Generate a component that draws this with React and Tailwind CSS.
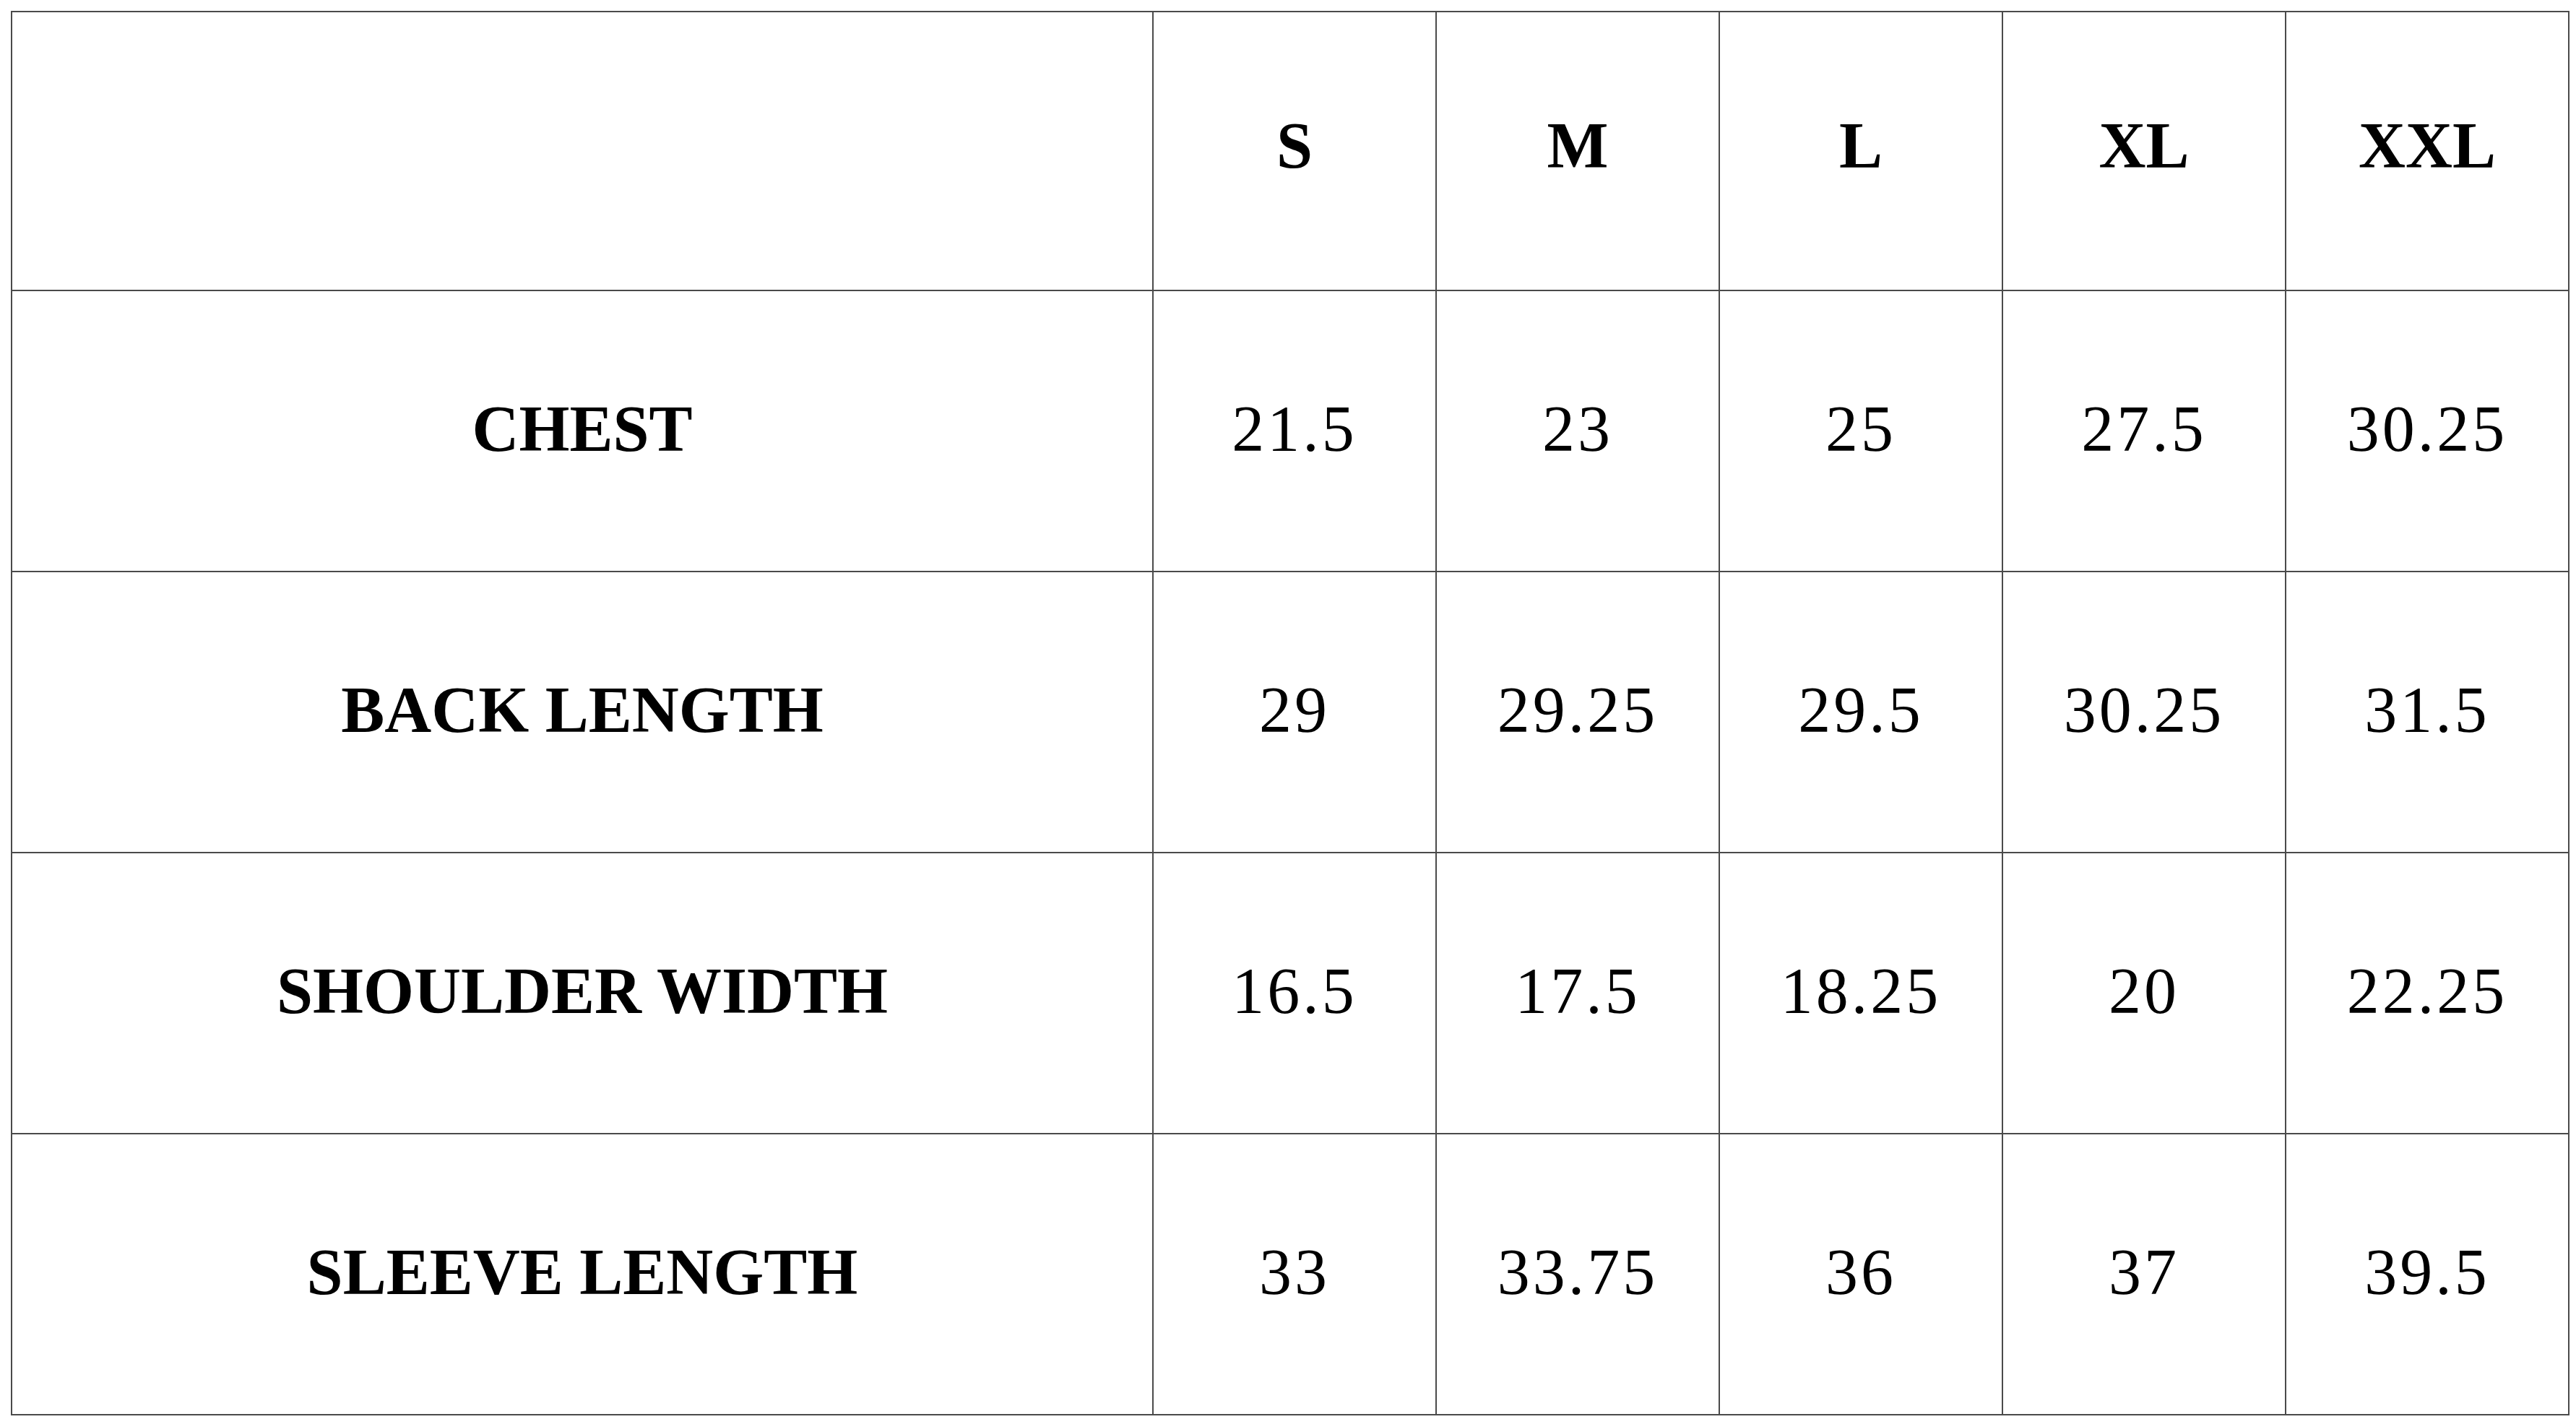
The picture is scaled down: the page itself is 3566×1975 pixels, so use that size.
import React from "react";

const sizes = ["S", "M", "L", "XL", "XXL"];

const rows = [
    { label: "CHEST", values: ["21.5", "23", "25", "27.5", "30.25"] },
    { label: "BACK LENGTH", values: ["29", "29.25", "29.5", "30.25", "31.5"] },
    { label: "SHOULDER WIDTH", values: ["16.5", "17.5", "18.25", "20", "22.25"] },
    { label: "SLEEVE LENGTH", values: ["33", "33.75", "36", "37", "39.5"] },
];

const cell = "flex items-center justify-center border-r-2 border-b-2 border-[#4a4a4a]";

const App = () => {
    return (
        <div className="min-h-screen bg-white pl-[15px] pt-[15px]" style={{ fontFamily: '"Liberation Serif", "Times New Roman", serif' }}>
            <div className="grid w-fit grid-cols-[1580px_repeat(5,392px)] border-l-2 border-t-2 border-[#4a4a4a] text-black">
                {/* header row */}
                <div className={`${cell} h-[386px]`} />
                {sizes.map((s) => (
                    <div key={s} className={`${cell} h-[386px] pb-4 text-[90px] font-bold`}>
                        {s}
                    </div>
                ))}

                {/* measurement rows */}
                {rows.map((row) => (
                    <React.Fragment key={row.label}>
                        <div className={`${cell} h-[389px] pb-[6px] text-[90px] font-bold whitespace-nowrap`}>
                            {row.label}
                        </div>
                        {row.values.map((v, i) => (
                            <div key={i} className={`${cell} h-[389px] pb-[6px] text-[90px] tracking-[4px]`}>
                                {v}
                            </div>
                        ))}
                    </React.Fragment>
                ))}
            </div>
        </div>
    );
};

export default App;
